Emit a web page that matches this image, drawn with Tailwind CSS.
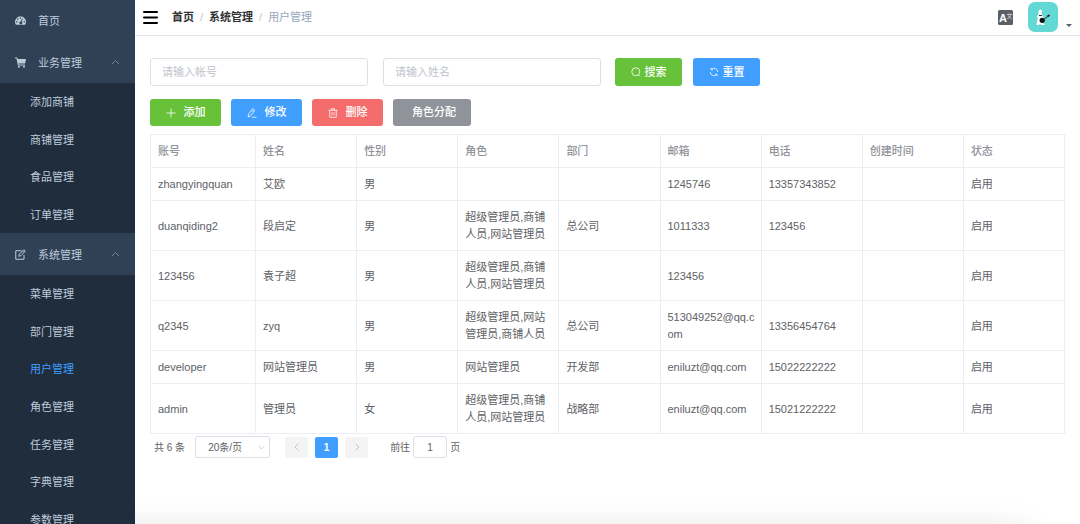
<!DOCTYPE html>
<html lang="zh-CN">
<head>
<meta charset="utf-8">
<meta name="viewport" content="width=device-width, initial-scale=1">
<title>用户管理</title>
<script src="https://cdn.jsdelivr.net/npm/@tailwindcss/browser@4"></script>
</head>
<body class="flex h-screen overflow-hidden bg-white font-['Liberation_Sans','Noto_Sans_CJK_SC',sans-serif] text-[11px] leading-[17px] text-[#606266]">

<nav aria-label="主菜单" class="w-[135px] shrink-0 overflow-hidden bg-[#1f2d3d] text-[#bfcbd9]">
  <a href="#" class="flex h-[41px] items-center bg-[#304156] pl-[15px]">
    <svg class="mr-3 size-[11px]" viewBox="0 0 22 22" fill="currentColor"><path fill-rule="evenodd" d="M11 2.5A11 11 0 0 0 1.9 19.5H20.1A11 11 0 0 0 11 2.5ZM11 4.3a1.5 1.5 0 1 1 0 3a1.5 1.5 0 0 1 0-3ZM5.7 6.4a1.5 1.5 0 1 1 0 3a1.5 1.5 0 0 1 0-3ZM3.5 11.8a1.5 1.5 0 1 1 0 3a1.5 1.5 0 0 1 0-3ZM18.5 11.8a1.5 1.5 0 1 1 0 3a1.5 1.5 0 0 1 0-3ZM14.3 6.8l1.5.5-2.6 6.2a2.8 2.8 0 1 1-1.7-.5Z"/></svg>
    <span class="pt-[2px]">首页</span>
  </a>
  <button type="button" aria-expanded="true" class="flex h-[42px] w-full items-center bg-[#304156] pr-[15px] pl-[15px]">
    <svg class="mr-3 size-[11px]" viewBox="0 0 22 22" fill="currentColor"><path d="M0 1h4.6l.7 2.8H22l-1.6 9.4H7.2l.4 2H20v2H5.8L3 3H0Z"/><circle cx="7.8" cy="19.6" r="2"/><circle cx="18" cy="19.6" r="2"/></svg>
    <span class="pt-[2px]">业务管理</span>
    <svg class="ml-auto size-[9px] text-[#8391a2]" viewBox="0 0 18 18" fill="none" stroke="currentColor" stroke-width="1.6"><path d="m2 12 7-7 7 7"/></svg>
  </button>
  <div class="flex h-[150px] flex-col">
    <a href="#" class="flex flex-1 items-center pt-[2px] pl-[30px]">添加商铺</a>
    <a href="#" class="flex flex-1 items-center pt-[2px] pl-[30px]">商铺管理</a>
    <a href="#" class="flex flex-1 items-center pt-[2px] pl-[30px]">食品管理</a>
    <a href="#" class="flex flex-1 items-center pt-[2px] pl-[30px]">订单管理</a>
  </div>
  <button type="button" aria-expanded="true" class="flex h-[42px] w-full items-center bg-[#304156] pr-[15px] pl-[15px]">
    <svg class="mr-3 size-[11px]" viewBox="0 0 22 22" fill="none" stroke="currentColor" stroke-width="2"><path d="M13 3.500H1.500v17H18V12"/><path d="M7.500 14.500l1-4L17.500 1.500 20.500 4.500l-9 9Z M15 4l3 3"/></svg>
    <span class="pt-[2px]">系统管理</span>
    <svg class="ml-auto size-[9px] text-[#8391a2]" viewBox="0 0 18 18" fill="none" stroke="currentColor" stroke-width="1.6"><path d="m2 12 7-7 7 7"/></svg>
  </button>
  <div class="flex h-[263px] flex-col">
    <a href="#" class="flex flex-1 items-center pt-[2px] pl-[30px]">菜单管理</a>
    <a href="#" class="flex flex-1 items-center pt-[2px] pl-[30px]">部门管理</a>
    <a href="#" aria-current="page" class="flex flex-1 items-center pt-[2px] pl-[30px] text-[#409eff]">用户管理</a>
    <a href="#" class="flex flex-1 items-center pt-[2px] pl-[30px]">角色管理</a>
    <a href="#" class="flex flex-1 items-center pt-[2px] pl-[30px]">任务管理</a>
    <a href="#" class="flex flex-1 items-center pt-[2px] pl-[30px]">字典管理</a>
    <a href="#" class="flex flex-1 items-center pt-[2px] pl-[30px]">参数管理</a>
  </div>
</nav>

<div class="relative min-w-0 flex-1">
  <header class="flex h-9 items-center border-b border-[#e4e5e8] pr-2 pl-2">
    <button type="button" aria-label="折叠菜单" class="mr-[14px]"><svg class="h-[13px] w-[15px] text-black" viewBox="0 0 15 13" fill="none" stroke="currentColor" stroke-width="2" stroke-linecap="round"><path d="M1 1h13M1 6.500h13M1 12h13"/></svg></button>
    <nav aria-label="面包屑" class="flex items-center gap-[6px]">
      <a href="#" class="font-bold text-[#303133]">首页</a><span class="text-[#c0c4cc]">/</span>
      <a href="#" class="font-bold text-[#303133]">系统管理</a><span class="text-[#c0c4cc]">/</span>
      <span class="text-[#97a8be]">用户管理</span>
    </nav>
    <button type="button" aria-label="语言" class="ml-auto"><svg class="size-[15px]" viewBox="0 0 30 30"><rect width="30" height="30" rx="3" fill="#5a5e66"/><text x="2" y="24" font-size="22" font-weight="bold" fill="#fff">A</text><text x="17" y="16" font-size="12" fill="#e4e5e7">文</text></svg></button>
    <button type="button" aria-label="用户菜单" class="ml-[15px] flex items-end pb-px">
      <svg class="size-[30px]" viewBox="0 0 30 30"><rect width="30" height="30" rx="7" fill="#63d9d5"/><path d="M10.500 9q.5-1.500 2.500-1.500l.8 1v4l1.500 2 .7 3-2 3.500 2.500.5v1.500h-3.500l-1-1.500-1 1.500H8.500l.5-4 .8-2-.8-3 1.500-1Z" fill="#fff"/><path d="M11 13.500h3M15 18l6-4.500" stroke="#333" stroke-width="1"/><circle cx="14.200" cy="18.300" r="2.600" fill="#111"/><path d="m19.500 14.500 2-1.500" stroke="#222" stroke-width="1.600"/></svg>
      <svg class="mb-[5px] ml-2 h-[3px] w-[6px] text-[#5a5e66]" viewBox="0 0 6 3" fill="currentColor"><path d="M0 0h6L3 3Z"/></svg>
    </button>
  </header>

  <main class="px-[15px] pt-[22px]">
    <form class="flex items-center">
      <input type="text" aria-label="帐号" placeholder="请输入帐号" class="h-7 w-[218px] rounded-[3px] border border-[#dcdfe6] px-[11px] placeholder:text-[#c0c4cc]">
      <input type="text" aria-label="姓名" placeholder="请输入姓名" class="ml-[15px] h-7 w-[218px] rounded-[3px] border border-[#dcdfe6] px-[11px] placeholder:text-[#c0c4cc]">
      <button type="button" class="ml-[14px] flex h-7 w-[67px] items-center justify-center gap-1 rounded-[3px] bg-[#67c23a] font-medium text-white">
        <svg class="size-[10px]" viewBox="0 0 20 20" fill="none" stroke="currentColor" stroke-width="1.600"><circle cx="9.500" cy="9.500" r="8"/><path d="m15 15.500 3 3"/></svg>搜索</button>
      <button type="button" class="ml-[11px] flex h-7 w-[67px] items-center justify-center gap-1 rounded-[3px] bg-[#409eff] font-medium text-white">
        <svg class="size-[10px]" viewBox="0 0 20 20" fill="none" stroke="currentColor" stroke-width="1.500"><path d="M4.500 5A7.500 7.500 0 0 1 17.500 10M15.500 15A7.500 7.500 0 0 1 2.500 10M4 1.500v4h4M16 18.500v-4h-4"/></svg>重置</button>
    </form>

    <div class="mt-[13px] flex gap-[10px] font-medium text-white">
      <button type="button" class="flex h-[27px] w-[71px] items-center justify-center gap-2 rounded-[3px] bg-[#67c23a]"><svg class="size-[10px]" viewBox="0 0 20 20" fill="none" stroke="currentColor" stroke-width="1.600"><path d="M10 1v18M1 10h18"/></svg>添加</button>
      <button type="button" class="flex h-[27px] w-[71px] items-center justify-center gap-2 rounded-[3px] bg-[#409eff]"><svg class="size-[10px]" viewBox="0 0 20 20" fill="none" stroke="currentColor" stroke-width="1.600"><path d="M3 12.500 11 1.500l4.500 3L7.500 15.500 2.500 18ZM9 4.500l4.500 3M10 18.500h9"/></svg>修改</button>
      <button type="button" class="flex h-[27px] w-[71px] items-center justify-center gap-2 rounded-[3px] bg-[#f56c6c]"><svg class="size-[10px]" viewBox="0 0 20 20" fill="none" stroke="currentColor" stroke-width="1.600"><path d="M1 4.500h18M3.500 4.500v14h13v-14M7 4.500v-3h6v3M8 8.500v6M12 8.500v6"/></svg>删除</button>
      <button type="button" class="h-[27px] w-[78px] rounded-[3px] bg-[#909399] pl-1">角色分配</button>
    </div>

    <table class="mt-2 w-full table-fixed border-collapse text-left wrap-anywhere [&_td]:border [&_td]:border-[#ebeef5] [&_td]:pt-2 [&_td]:pb-[7px] [&_td]:pr-[6px] [&_td]:pl-[7px] [&_th]:border [&_th]:border-[#ebeef5] [&_th]:pt-2 [&_th]:pb-[7px] [&_th]:pr-[6px] [&_th]:pl-[7px] [&_th]:font-medium [&_th]:text-[#909399]">
      <colgroup><col class="w-[105px]"><col><col><col><col><col><col><col><col></colgroup>
      <thead><tr><th>账号</th><th>姓名</th><th>性别</th><th>角色</th><th>部门</th><th>邮箱</th><th>电话</th><th>创建时间</th><th>状态</th></tr></thead>
      <tbody>
        <tr><td>zhangyingquan</td><td>艾欧</td><td>男</td><td></td><td></td><td>1245746</td><td>13357343852</td><td></td><td>启用</td></tr>
        <tr><td>duanqiding2</td><td>段启定</td><td>男</td><td>超级管理员,商铺人员,网站管理员</td><td>总公司</td><td>1011333</td><td>123456</td><td></td><td>启用</td></tr>
        <tr><td>123456</td><td>袁子超</td><td>男</td><td>超级管理员,商铺人员,网站管理员</td><td></td><td>123456</td><td></td><td></td><td>启用</td></tr>
        <tr><td>q2345</td><td>zyq</td><td>男</td><td>超级管理员,网站管理员,商铺人员</td><td>总公司</td><td>513049252@qq.com</td><td>13356454764</td><td></td><td>启用</td></tr>
        <tr><td>developer</td><td>网站管理员</td><td>男</td><td>网站管理员</td><td>开发部</td><td>eniluzt@qq.com</td><td>15022222222</td><td></td><td>启用</td></tr>
        <tr><td>admin</td><td>管理员</td><td>女</td><td>超级管理员,商铺人员,网站管理员</td><td>战略部</td><td>eniluzt@qq.com</td><td>15021222222</td><td></td><td>启用</td></tr>
      </tbody>
    </table>

    <div class="mt-[2px] flex items-center pl-1 text-[10px]">
      <span>共 6 条</span>
      <div class="relative ml-[10px]">
        <select aria-label="每页条数" class="block h-[22px] w-[75px] appearance-none rounded-[2px] border border-[#dcdfe6] bg-white pl-3"><option>20条/页</option></select>
        <svg class="pointer-events-none absolute top-2 right-[5px] size-[7px] text-[#c0c4cc]" viewBox="0 0 14 14" fill="none" stroke="currentColor" stroke-width="1.600"><path d="m1 4 6 6 6-6"/></svg>
      </div>
      <button type="button" aria-label="上一页" disabled class="ml-[15px] flex h-[21px] w-[23px] items-center justify-center rounded-[2px] bg-[#f4f4f5] text-[#c0c4cc]"><svg class="size-2" viewBox="0 0 16 16" fill="none" stroke="currentColor" stroke-width="2"><path d="m11 1-7 7 7 7"/></svg></button>
      <button type="button" aria-current="page" class="ml-[7px] h-[21px] w-[23px] rounded-[2px] bg-[#409eff] font-bold text-white">1</button>
      <button type="button" aria-label="下一页" disabled class="ml-[7px] flex h-[21px] w-[23px] items-center justify-center rounded-[2px] bg-[#f4f4f5] text-[#c0c4cc]"><svg class="size-2" viewBox="0 0 16 16" fill="none" stroke="currentColor" stroke-width="2"><path d="m5 1 7 7-7 7"/></svg></button>
      <label for="page" class="ml-[22px]">前往</label>
      <input id="page" type="text" value="1" class="mx-[3px] h-[22px] w-[34px] rounded-[3px] border border-[#dcdfe6] text-center">
      <span>页</span>
    </div>
  </main>
  <div class="pointer-events-none absolute inset-x-0 bottom-0 h-7 bg-linear-to-b from-black/0 via-black/1 to-black/5 mask-r-from-90% mask-r-to-97%"></div>
</div>
</body>
</html>
